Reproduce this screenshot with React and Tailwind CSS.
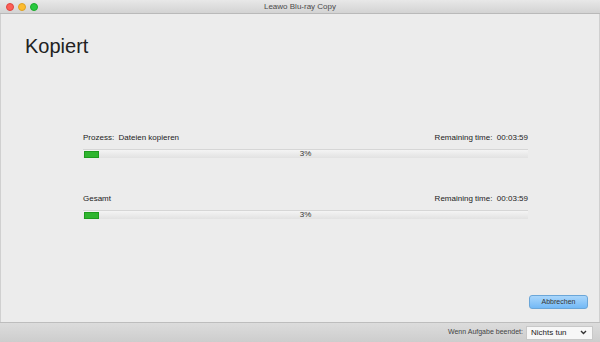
export default function App() {
  const font = { fontFamily: '"Liberation Sans", Arial, sans-serif' };
  const Bar = () => (
    <div className="relative h-[9px] bg-gradient-to-b from-[#f4f4f4] to-[#e2e2e2] border-t border-[#d6d6d6]">
      <div className="absolute left-[1px] top-[1px] h-[7px] w-[15px] bg-[#2fb52f] border border-[#1e9a1e]" />
      <div className="absolute inset-0 flex items-center justify-center text-[8px] text-[#333] leading-none">3%</div>
    </div>
  );
  return (
    <div className="w-[600px] h-[342px] bg-[#ececec] flex flex-col overflow-hidden text-[#222]" style={font}>
      <div className="h-[14px] flex items-center relative bg-gradient-to-b from-[#e8e8e8] to-[#d3d3d3] border-b border-[#b9b9b9]">
        <div className="flex gap-[4px] pl-[6px]">
          <div className="w-[8px] h-[8px] rounded-full bg-[#fc5f57] border border-[#e0443e]" />
          <div className="w-[8px] h-[8px] rounded-full bg-[#fdbc2e] border border-[#dea123]" />
          <div className="w-[8px] h-[8px] rounded-full bg-[#29c940] border border-[#1aab29]" />
        </div>
        <div className="absolute inset-0 flex items-center justify-center text-[8px] text-[#4a4a4a]">Leawo Blu-ray Copy</div>
      </div>
      <div className="flex-1 flex flex-col border-x border-[#d0d0d0]">
        <div className="pl-[24px] pt-[20px] text-[20px] leading-[24px] text-[#222]">Kopiert</div>
        <div className="pl-[82px] pr-[71px] pt-[75px] flex flex-col">
          <div className="flex justify-between text-[8px] leading-[10px] text-[#222] pb-[6px]">
            <span>Prozess:&nbsp; Dateien kopieren</span>
            <span>Remaining time:&nbsp; 00:03:59</span>
          </div>
          <Bar />
          <div className="flex justify-between text-[8px] leading-[10px] text-[#222] pt-[36px] pb-[6px]">
            <span>Gesamt</span>
            <span>Remaining time:&nbsp; 00:03:59</span>
          </div>
          <Bar />
        </div>
        <div className="flex-1" />
        <div className="flex justify-end pr-[11px] pb-[13px]">
          <div className="w-[59px] h-[14px] rounded-[3px] bg-gradient-to-b from-[#a9d6fb] to-[#73b9f6] border border-[#6ba6d8] flex items-center justify-center text-[7px] text-[#333]">Abbrechen</div>
        </div>
      </div>
      <div className="h-[20px] bg-gradient-to-b from-[#dcdcdc] to-[#cdcdcd] border-t border-[#bdbdbd] flex items-center justify-end pr-[7px] gap-[3px]">
        <span className="text-[7px] text-[#444]">Wenn Aufgabe beendet:</span>
        <div className="w-[67px] h-[14px] bg-[#f7f7f7] border border-[#c8c8c8] flex items-center justify-between pl-[4px] pr-[5px]">
          <span className="text-[8px] text-[#222]">Nichts tun</span>
          <svg width="7" height="5" viewBox="0 0 7 5"><path d="M1 1 L3.5 3.5 L6 1" stroke="#333" strokeWidth="1.4" fill="none" /></svg>
        </div>
      </div>
    </div>
  );
}
